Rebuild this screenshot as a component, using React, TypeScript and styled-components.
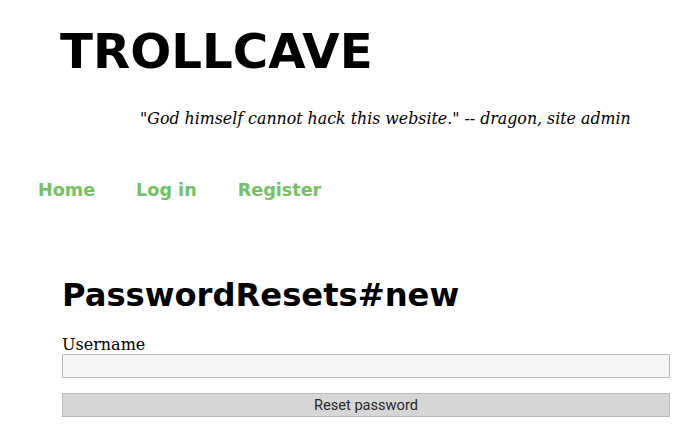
import React from "react";
import styled, { createGlobalStyle } from "styled-components";

const Global = createGlobalStyle`
  html, body { margin: 0; padding: 0; background: #fff; }
  body { font-family: "DejaVu Serif", serif; color: #000; }
`;

const Page = styled.div`
  display: flex;
  flex-direction: column;
`;

const Header = styled.header`
  display: flex;
  flex-direction: column;
  padding-top: 23px;
`;

const Title = styled.h1`
  margin: 0 0 0 60px;
  font-family: "DejaVu Sans", sans-serif;
  font-weight: bold;
  font-size: 48.3px;
  line-height: 56px;
`;

const Quote = styled.p`
  margin: 30px 0 0 140px;
  font-family: "DejaVu Serif", serif;
  font-style: italic;
  font-size: 15.8px;
  line-height: 19px;
`;

const Nav = styled.nav`
  display: flex;
  gap: 41px;
  margin: 52px 0 0 38px;
`;

const NavLink = styled.a`
  font-family: "DejaVu Sans", sans-serif;
  font-weight: bold;
  font-size: 17.6px;
  line-height: 21px;
  color: #72c264;
  text-decoration: none;
`;

const Main = styled.main`
  display: flex;
  flex-direction: column;
  margin: 76px 17px 0 62px;
`;

const Heading = styled.h2`
  margin: 0;
  font-family: "DejaVu Sans", sans-serif;
  font-weight: bold;
  font-size: 32.2px;
  line-height: 37px;
`;

const Form = styled.form`
  display: flex;
  flex-direction: column;
  margin-top: 21px;
`;

const Label = styled.label`
  font-family: "DejaVu Serif", serif;
  font-size: 16px;
  line-height: 19px;
`;

const Input = styled.input`
  box-sizing: border-box;
  height: 24px;
  margin-top: 0;
  background: #f6f6f6;
  border: 1px solid #bbb;
  padding: 0 4px;
  font-size: 14px;
  outline: none;
`;

const Button = styled.button`
  box-sizing: border-box;
  height: 24px;
  margin-top: 15px;
  background: #d6d6d6;
  border: 1px solid #bbb;
  font-family: Roboto, sans-serif;
  font-size: 14.6px;
  color: #2a2a2a;
  padding: 0;
`;

export default function App() {
  return (
    <Page>
      <Global />
      <Header>
        <Title>TROLLCAVE</Title>
        <Quote>"God himself cannot hack this website." -- dragon, site admin</Quote>
        <Nav>
          <NavLink href="#">Home</NavLink>
          <NavLink href="#">Log in</NavLink>
          <NavLink href="#">Register</NavLink>
        </Nav>
      </Header>
      <Main>
        <Heading>PasswordResets#new</Heading>
        <Form onSubmit={(e) => e.preventDefault()}>
          <Label htmlFor="username">Username</Label>
          <Input id="username" type="text" />
          <Button type="submit">Reset password</Button>
        </Form>
      </Main>
    </Page>
  );
}
